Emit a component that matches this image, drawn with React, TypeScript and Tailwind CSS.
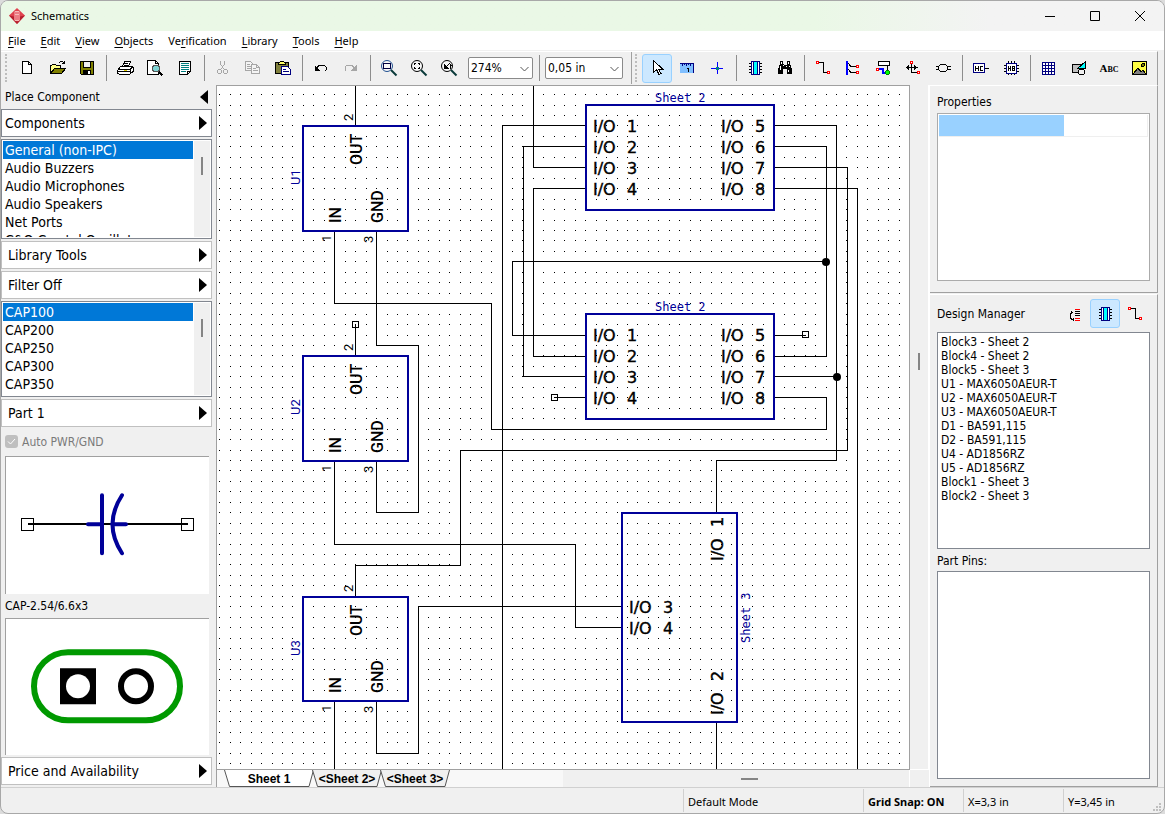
import type { ReactNode } from "react";
import clsx from "clsx";

/* ---------- icons: 16x16, drawn on the pixel grid ---------- */

function Icon({ children, size = 16 }: { children: ReactNode; size?: number }) {
  return (
    <svg
      aria-hidden
      width={size}
      height={size}
      viewBox="0 0 16 16"
      fill="none"
      stroke="#000"
      shapeRendering="crispEdges"
      className="block shrink-0 overflow-visible"
    >
      {children}
    </svg>
  );
}

const pin = (x: number, y: number) => (
  <rect x={x} y={y} width="2" height="2" stroke="#f00" fill="#fff" />
);

const WireIcon = (
  <Icon>
    <path d="M4 2.500h4.500v10h3" />
    {pin(1.5, 1.5)}
    {pin(12.5, 11.5)}
  </Icon>
);

const ChipIcon = (
  <Icon>
    <path d="M2 3.500h13M2 6.500h13M2 9.500h13M2 12.500h13" />
    <rect x="4.500" y="1.500" width="8" height="13" fill="#fff" stroke="#000080" />
    <rect x="6.500" y="1.500" width="4" height="13" fill="#0ff" stroke="#000080" />
  </Icon>
);

const Lens = ({ color = "#000" }: { color?: string }) => (
  <>
    <circle cx="6" cy="6" r="5.500" stroke={color} fill="#f8f8f8" shapeRendering="auto" />
    <path d="M10 10l5.500 5.500" strokeWidth="2" stroke="#0a3a3a" shapeRendering="auto" />
  </>
);

const icons: Record<string, ReactNode> = {
  New: (
    <Icon>
      <path d="M3.500 1.500h6l3 3v9h-9z" fill="#fff" />
      <path d="M9.500 1.500v3h3" />
    </Icon>
  ),
  Open: (
    <Icon>
      <path d="M1.500 13.500v-8h1l1-1h3l1 1h4v3" fill="#ff8" />
      <path d="M1.500 13.500l4-5h11l-4 5z" fill="#808000" />
      <path d="M9.500 3.500l2-2h2l2 2M15.500 1v3M13 3.500h3" />
    </Icon>
  ),
  Save: (
    <Icon>
      <path d="M1.500 1.500h13v13h-12l-1-1z" fill="#808000" />
      <rect x="4.500" y="1.500" width="7" height="6" fill="#efefef" />
      <rect x="4" y="10" width="8" height="4" fill="#000" stroke="none" />
      <rect x="9" y="11" width="2" height="3" fill="#fff" stroke="none" />
    </Icon>
  ),
  Print: (
    <Icon>
      <path d="M5.500 6.500l2-5h6l-2 5z" fill="#fff" />
      <path d="M7 3.500h4M7 5.500h4" />
      <path d="M0.500 10.500l3-4h11l1.500 1v4l-3 2.500h-11l-1.500-1z" fill="#fff" />
      <path d="M1 9.500h12l3-3M13.500 9.500v4M1 11.500h12" />
      <path d="M7 10.500h3" stroke="#e0d000" />
    </Icon>
  ),
  Preview: (
    <Icon>
      <path d="M0.500 0.500h8l3 3v11h-11z" fill="#fff" />
      <path d="M8.500 0.500v3h3" />
      <circle cx="9" cy="8.500" r="3.500" fill="#7fd6d6" stroke="#555" />
      <path d="M12 12l3.500 3.500" strokeWidth="2" />
    </Icon>
  ),
  Report: (
    <Icon>
      <path d="M2.500 1.500h11v10l-3 3h-8z" fill="#fff" />
      <path d="M4 3.500h8M4 5.500h8M4 7.500h8M4 9.500h8M4 11.500h5" stroke="#008080" />
      <path d="M10.500 14v-2.500h3" />
    </Icon>
  ),
  Cut: (
    <Icon>
      <g stroke="#a6a6a6">
        <path d="M5.500 1v3l4 6M9.500 1v3l-4 6" />
        <circle cx="4.500" cy="11.500" r="2" />
        <circle cx="10.500" cy="11.500" r="2" />
      </g>
    </Icon>
  ),
  Copy: (
    <Icon>
      <g stroke="#a6a6a6" fill="#f4f4f4">
        <path d="M0.500 1.500h5l3 3v6h-8zM2 4.500h3M2 6.500h4M2 8.500h4" />
        <path d="M6.500 4.500h5l3 3v6h-8zM11.500 4.500v3h3M8 8.500h3M8 10.500h5" />
      </g>
    </Icon>
  ),
  Paste: (
    <Icon>
      <rect x="0.500" y="2.500" width="13" height="11" fill="#80803c" />
      <path d="M3.500 4.500v-1l2-2h3l2 2v1z" fill="#ff6" />
      <path d="M6.500 6.500h6l3 3v5h-9z" fill="#fff" stroke="#000080" />
      <path d="M8 9.500h3M8 11.500h6" stroke="#000080" />
    </Icon>
  ),
  Undo: (
    <Icon>
      <path d="M3 8.500l2.500-2.500 2-1h3l2.500 2v3l-1.500 1.500" />
      <path d="M1.500 5v5.500h5.500z" fill="#000" stroke="none" />
    </Icon>
  ),
  Redo: (
    <Icon>
      <path d="M12 8.500l-2.500-2.500-2-1h-3l-2.500 2v3l1.500 1.500" stroke="#a6a6a6" />
      <path d="M13.500 5v5.500h-5.500z" fill="#a6a6a6" stroke="none" />
    </Icon>
  ),
  "Zoom In": (
    <Icon>
      <Lens color="#1f4f8f" />
      <rect x="2.500" y="3.500" width="7" height="5" stroke="#000040" />
    </Icon>
  ),
  "Zoom All": (
    <Icon>
      <Lens />
      <path d="M3.500 5v-1.500h1.500M7 3.500h1.500v1.500M3.500 7v1.500h1.500M7 8.500h1.500v-1.500" />
    </Icon>
  ),
  "Zoom Previous": (
    <Icon>
      <Lens />
      <path d="M3 4v5h5z" fill="#000" stroke="none" />
      <path d="M5 7l3.500-3.500 1.500 2-1 3" />
    </Icon>
  ),
  Select: (
    <Icon>
      <path d="M4.500 0.500v12l3-3 2.500 5 2-1-2.500-4.500h4z" fill="#fff" />
    </Icon>
  ),
  Measure: (
    <Icon>
      <rect x="1.500" y="3.500" width="13" height="9" fill="#80bfff" stroke="#80bfff" />
      <path d="M1 3.500h14M14.500 3v10M3.500 4v2M5.500 4v1M7.500 4v2M9.500 4v1M11.500 4v2" stroke="#000080" />
      <path d="M8 8.500h1.500v3" />
    </Icon>
  ),
  Origin: (
    <Icon>
      <path d="M8.500 2v12M2 8.500h12" stroke="#00f" />
      <rect x="7" y="7" width="3" height="3" fill="#008080" stroke="none" />
    </Icon>
  ),
  Component: ChipIcon,
  Find: (
    <Icon>
      <g fill="#000" stroke="none">
        <path d="M3 1h3v3l1 1h2l1-1V1h3v3l2 5v5h-5V9H6v5H1V9l2-5z" />
      </g>
      <path d="M4.500 2v2M11.500 2v2M3.500 6v4M9.500 6v1M12.500 6v1M11.500 10v2M6.500 5v1" stroke="#fff" />
    </Icon>
  ),
  Wire: WireIcon,
  Bus: (
    <Icon>
      <path d="M2 1v14" stroke="#00f" strokeWidth="2" />
      <path d="M3 3l3 3.500h5M3 9l3 3.500h5" />
      {pin(11.5, 5.5)}
      {pin(11.5, 11.5)}
    </Icon>
  ),
  "Net Port": (
    <Icon>
      <rect x="3.500" y="1.500" width="11" height="4" fill="#fff" />
      <path d="M12.500 6v4" />
      <path d="M4 9h4v4h4" stroke="#00f" strokeWidth="2" />
      {pin(1.5, 8.5)}
      <circle cx="12.500" cy="12.500" r="2" fill="#0f0" stroke="#008000" />
    </Icon>
  ),
  "Move Pin": (
    <Icon>
      <path d="M6.500 4v8.500h5M0.500 7.500h12M3.500 5v5M2.500 6v3M9.500 5v5M10.500 6v3" />
      {pin(5.5, 1.5)}
      {pin(12.5, 11.5)}
    </Icon>
  ),
  Connector: (
    <Icon>
      <path d="M5.500 4.500h5l2 2v3l-2 2h-5l-2-2v-3zM0.500 6.500h3M0.500 9.500h3M12.500 6.500h3M12.500 9.500h3" />
    </Icon>
  ),
  "Hierarchy Connector": (
    <Icon>
      <rect x="0.500" y="3.500" width="11" height="9" fill="#fff" stroke="#000080" />
      <path d="M12 8.500h4M2.500 6v5M5.500 6v5M3 8.500h2M10 6.500H7.500v4H10" />
    </Icon>
  ),
  "Hierarchy Block": (
    <Icon>
      <path d="M5.500 1v14M8.500 1v14M11.500 1v14M1 5.500h15M1 8.500h15M1 11.500h15" />
      <rect x="3.500" y="3.500" width="10" height="10" fill="#fff" stroke="#000080" />
      <path d="M5.500 6v5M7.500 6v5M6 8.500h1M9.500 6v5M10 6.500h1.500v4H10M10 8.500h1" />
    </Icon>
  ),
  Table: (
    <Icon>
      <rect x="1.500" y="2.500" width="12" height="12" fill="#fff" stroke="#000080" />
      <path d="M4.500 3v11M7.500 3v11M10.500 3v11M2 5.500h11M2 8.500h11M2 11.500h11" stroke="#000080" />
    </Icon>
  ),
  Shape: (
    <Icon>
      <rect x="1.500" y="4.500" width="9" height="8" fill="#c0c0c0" />
      <circle cx="10.500" cy="12" r="3" fill="#f0f0f0" />
      <path d="M14.500 1.500v7h-8z" fill="#0ff" />
    </Icon>
  ),
  Picture: (
    <Icon>
      <rect x="1.500" y="1.500" width="14" height="13" fill="#ff4" />
      <circle cx="12" cy="5" r="1.500" fill="#808000" />
      <path d="M2 14l5-6 3 4 2-2 3 4z" fill="#808080" />
    </Icon>
  ),
};

function AppLogo() {
  return (
    <svg aria-hidden width="16" height="16" viewBox="0 0 16 16">
      <path d="M8 0l8 7.500L8 16 0 7.500z" fill="#e04350" />
      <path d="M8 16l-8-8.500 5 1V12l3 1.500 3-1.500V8.500l5-1z" fill="#b51f2e" />
      <path d="M6 3.500h4v9H6zM8 3.500v9M6 6.500h4" fill="none" stroke="#f7b8b8" />
    </svg>
  );
}

/* ---------- toolbar ---------- */

function ToolButton({ label, active, children }: { label: string; active?: boolean; children?: ReactNode }) {
  return (
    <button
      type="button"
      aria-label={label}
      title={label}
      className={clsx(
        "flex h-[29px] w-[30px] shrink-0 items-center justify-center rounded-[3px] border",
        active ? "border-[#99d1ff] bg-[#cce8ff]" : "border-transparent",
      )}
    >
      {children ?? icons[label]}
    </button>
  );
}

function Separator() {
  return (
    <div className="flex w-2 shrink-0 justify-center">
      <div className="h-[26px] w-px bg-[#8d8d8d]" />
    </div>
  );
}

function Grip() {
  return <div className="mr-[5px] h-7 shrink-0 border-l-2 border-dotted border-[#bdbdbd]" />;
}

function Combo({ label, value, options, className }: { label: string; value: string; options: string[]; className: string }) {
  return (
    <div className={clsx("relative h-[22px] shrink-0", className)}>
      <select
        aria-label={label}
        defaultValue={value}
        className="h-full w-full appearance-none rounded-[2px] border border-[#8a8a8a] bg-white pl-[2px] text-xs"
      >
        {options.map((o) => (
          <option key={o}>{o}</option>
        ))}
      </select>
      <svg aria-hidden width="9" height="6" className="pointer-events-none absolute top-[9px] right-1">
        <path d="M0.500 1l4 4 4-4" fill="none" stroke="#555" />
      </svg>
    </div>
  );
}

function Tools({ groups }: { groups: string[][] }) {
  return (
    <>
      {groups.map((group, i) => (
        <div key={i} className="flex items-center">
          {i > 0 && <Separator />}
          {group.map((name) =>
            name === "Text" ? (
              <ToolButton key={name} label={name}>
                <span className="font-['Liberation_Serif',serif] text-[11px] font-bold">
                  A<span className="text-[8px]">BC</span>
                </span>
              </ToolButton>
            ) : (
              <ToolButton key={name} label={name} active={name === "Select"} />
            ),
          )}
        </div>
      ))}
    </>
  );
}

/* ---------- left panel ---------- */

function Arrow({ left }: { left?: boolean }) {
  return (
    <svg aria-hidden width="8" height="14" className="shrink-0">
      <path d={left ? "M8 0v14L0 7z" : "M0 0v14l8-7z"} />
    </svg>
  );
}

function PanelButton({ children, dark }: { children: string; dark?: boolean }) {
  return (
    <button
      type="button"
      className={clsx(
        "flex h-7 shrink-0 items-center justify-between border bg-white pr-1 text-left text-sm",
        dark ? "border-[#828790] pl-[3px]" : "border-[#c0c0c0] pl-[6px]",
      )}
    >
      {children}
      <Arrow />
    </button>
  );
}

function ListBox({ label, items, className }: { label: string; items: string[]; className: string }) {
  return (
    <div className={clsx("flex shrink-0 border border-[#828790] bg-white p-px", className)}>
      <ul role="listbox" aria-label={label} className="min-w-0 flex-1 overflow-hidden text-sm leading-[18px]">
        {items.map((item, i) => (
          <li
            key={item}
            role="option"
            aria-selected={i === 0}
            className={clsx("pl-[2px] whitespace-nowrap", i === 0 && "bg-[#0078d7] text-white")}
          >
            {item}
          </li>
        ))}
      </ul>
      <div className="ml-px flex w-4 justify-center bg-[#f0f0f0] pt-4">
        <div className="h-[18px] w-[2px] bg-[#858585]" />
      </div>
    </div>
  );
}

function LeftPanel() {
  return (
    <aside className="flex w-[216px] shrink-0 flex-col border-r border-[#a0a0a0] pr-1 pb-[2px]">
      <header className="flex h-6 shrink-0 items-center justify-between pr-1 pl-1">
        <h2>Place Component</h2>
        <button type="button" aria-label="Collapse panel">
          <Arrow left />
        </button>
      </header>
      <div className="flex min-h-0 flex-1 flex-col gap-[2px]">
        <PanelButton dark>Components</PanelButton>
        <ListBox
          label="Component libraries"
          className="h-[100px]"
          items={[
            "General (non-IPC)",
            "Audio Buzzers",
            "Audio Microphones",
            "Audio Speakers",
            "Net Ports",
            "C&O Crystal Oscillators",
          ]}
        />
        <PanelButton>Library Tools</PanelButton>
        <PanelButton>Filter Off</PanelButton>
        <ListBox label="Components" className="h-24" items={["CAP100", "CAP200", "CAP250", "CAP300", "CAP350"]} />
        <PanelButton>Part 1</PanelButton>
        <label className="flex h-[25px] shrink-0 items-center gap-1 pl-1 text-[#7a7a7a]">
          <span className="relative block h-[13px] w-[13px]">
            <input type="checkbox" checked disabled readOnly className="block h-full w-full appearance-none rounded-[3px] bg-[#bfbfbf]" />
            <svg aria-hidden width="13" height="13" className="pointer-events-none absolute inset-0">
              <path d="M3 6.500l2.500 2.500 4.500-5" fill="none" stroke="#fff" />
            </svg>
          </span>
          Auto PWR/GND
        </label>
        <div className="mr-[3px] ml-1 min-h-0 flex-1 border-t border-l border-[#a0a0a0] bg-white">
          <svg role="img" aria-label="Symbol preview" viewBox="0 0 203 136" className="h-full w-full">
            <g fill="none" stroke="#000" shapeRendering="crispEdges">
              <path d="M22 67h160" strokeWidth="2" />
              <rect x="15.500" y="61.500" width="12" height="12" />
              <rect x="175.500" y="61.500" width="12" height="12" />
            </g>
            <path
              d="M96 38v58M82 67h14M106 67h14M116 38Q97 67 116 96"
              fill="none"
              stroke="#000099"
              strokeWidth="4"
              strokeLinecap="round"
            />
          </svg>
        </div>
        <p className="flex h-5 shrink-0 items-center pl-1">CAP-2.54/6.6x3</p>
        <div className="mr-[3px] ml-1 min-h-0 flex-1 border-t border-l border-[#a0a0a0] bg-white">
          <svg role="img" aria-label="Footprint preview" viewBox="0 0 203 136" className="h-full w-full">
            <rect x="28" y="33" width="146" height="68" rx="34" fill="none" stroke="#009900" strokeWidth="6" />
            <rect x="54" y="49" width="36" height="36" />
            <circle cx="72" cy="67" r="12" fill="#fff" />
            <circle cx="130" cy="67" r="15" fill="none" stroke="#000" strokeWidth="6" />
          </svg>
        </div>
        <PanelButton>Price and Availability</PanelButton>
      </div>
    </aside>
  );
}

/* ---------- schematic sheet ---------- */

// Grid pitch at the current zoom; dots snap to whole pixels
const PITCH = 10.453;
const dots = Array.from({ length: 100 }, (_, r) =>
  Array.from({ length: 180 }, (_, c) => {
    const x = Math.round(229.75 + (c - 1) * PITCH);
    const y = Math.round(94.1 + r * PITCH);
    return `M${x} ${y}h1v1h-1z`;
  }).join(""),
).join("");

const wires = [
  "M355.500 80V126",
  "M334.500 231V303.500H491.500V429.500H826.500V397.500H774",
  "M376.500 231V345.500H418.500V512.500H376.500V461",
  "M355.500 324V356",
  "M334.500 461V544.500H575.500V627.500H622",
  "M355.500 597V565.500H460.500V450.500H847.500V167.500H774",
  "M334.500 701V2000",
  "M376.500 701V753.500H418.500V606.500H622",
  "M586 125.500H502.500V2000",
  "M586 146.500H523.500V376.500H586",
  "M533.500 80V167.500H586",
  "M586 188.500H533.500V356.500H586",
  "M586 335.500H512.500V261.500H826",
  "M774 146.500H826.500V356.500H774",
  "M774 125.500H836.500V460.500H716.500V513",
  "M774 376.500H836",
  "M774 188.500H857.500V2000",
  "M554 397.500H586",
  "M774 335.500H805",
  "M716.500 722V2000",
].join("");

const pinFont = "font-['Roboto',sans-serif] text-[16px] font-medium";
const nameFont = "font-['DejaVu_Sans_Mono',monospace] text-[12px] fill-[#000099]";
const numberFont = "font-['Roboto',sans-serif] text-[13px]";

function VText({ x, y, className, children }: { x: number; y: number; className: string; children: string }) {
  return (
    <text transform={`translate(${x} ${y}) rotate(-90)`} className={className}>
      {children}
    </text>
  );
}

function Port({ x, y, n, vertical }: { x: number; y: number; n: number; vertical?: boolean }) {
  return (
    <text
      transform={`translate(${x} ${y}) rotate(${vertical ? -90 : 0})`}
      stroke="#000"
      strokeWidth="0.4"
      className="font-['DejaVu_Sans',sans-serif] text-[16px]"
    >
      I/O <tspan x="34">{n}</tspan>
    </text>
  );
}

function Regulator({ name, y, h = 105 }: { name: string; y: number; h?: number }) {
  return (
    <g>
      <rect x="303" y={y} width="105" height={h} fill="none" stroke="#000099" strokeWidth="2" shapeRendering="crispEdges" />
      <VText x={300} y={y + 59} className="fill-[#000099] font-['Roboto',sans-serif] text-[13px]">{name}</VText>
      <VText x={353} y={y - 5} className={numberFont}>2</VText>
      <VText x={362} y={y + 39} className={pinFont}>OUT</VText>
      <VText x={341} y={y + h - 8} className={pinFont}>IN</VText>
      <VText x={383} y={y + h - 8} className={pinFont}>GND</VText>
      <VText x={331} y={y + h + 11} className={numberFont}>1</VText>
      <VText x={373} y={y + h + 12} className={numberFont}>3</VText>
    </g>
  );
}

function SheetBlock({ y }: { y: number }) {
  return (
    <g>
      <text x="655" y={y - 3} className={nameFont}>Sheet 2</text>
      <rect x="586" y={y} width="188" height="105" fill="none" stroke="#000099" strokeWidth="2" shapeRendering="crispEdges" />
      {[1, 2, 3, 4].map((n) => (
        <g key={n}>
          <Port x={593} y={y + 6 + n * 21} n={n} />
          <Port x={721} y={y + 6 + n * 21} n={n + 4} />
        </g>
      ))}
    </g>
  );
}

function Schematic() {
  return (
    <svg role="img" aria-label="Schematic sheet" className="block h-full w-full bg-white">
      {/* shapes are laid out in window coordinates */}
      <g transform="translate(-217 -86)">
        <path d={dots} shapeRendering="crispEdges" />
        <path d={wires} fill="none" stroke="#000" shapeRendering="crispEdges" />
        <g fill="none" stroke="#000" shapeRendering="crispEdges">
          <rect x="352.500" y="321.500" width="6" height="6" />
          <rect x="551.500" y="394.500" width="6" height="6" />
          <rect x="802.500" y="331.500" width="6" height="6" />
        </g>
        <circle cx="826" cy="262" r="4" />
        <circle cx="837" cy="377" r="4" />
        <Regulator name="U1" y={126} />
        <Regulator name="U2" y={356} />
        <Regulator name="U3" y={597} h={104} />
        <SheetBlock y={105} />
        <SheetBlock y={314} />
        <rect x="622" y="513" width="115" height="209" fill="none" stroke="#000099" strokeWidth="2" shapeRendering="crispEdges" />
        <Port x={629} y={613} n={3} />
        <Port x={629} y={634} n={4} />
        <Port x={723} y={561} n={1} vertical />
        <Port x={723} y={715} n={2} vertical />
        <VText x={750} y={643} className={nameFont}>Sheet 3</VText>
      </g>
    </svg>
  );
}

function SheetTab({ children, active }: { children: string; active?: boolean }) {
  const w = active ? 90 : 70;
  return (
    <button
      type="button"
      role="tab"
      aria-selected={!!active}
      className={clsx("relative h-[17px] font-['Liberation_Sans',sans-serif] text-xs font-bold", active ? "w-[90px]" : "-ml-[2px] w-[70px]")}
    >
      <svg aria-hidden width={w} height="17" className="absolute inset-0">
        <path d={`M0.500 0l5 16.500H${w - 5}l4.500-16.500`} fill={active ? "#fff" : "#f0f0f0"} stroke="#555" />
      </svg>
      <span className="relative">{children}</span>
    </button>
  );
}

function Workspace() {
  return (
    <main className="flex min-w-0 flex-1 flex-col">
      <div className="flex min-h-0 flex-1">
        <div className="min-w-0 flex-1 overflow-hidden border-t border-r border-b border-[#a0a0a0]">
          <Schematic />
        </div>
        <div className="flex w-[19px] items-center justify-center border-r border-b border-white pb-[132px]">
          <div className="h-[17px] w-[2px] bg-[#858585]" />
        </div>
      </div>
      <div className="flex h-[17px] shrink-0">
        <div role="tablist" className="flex w-[346px] shrink-0 bg-[#f8f8f8] pl-[7px]">
          <SheetTab active>Sheet 1</SheetTab>
          <SheetTab>{"<Sheet 2>"}</SheetTab>
          <SheetTab>{"<Sheet 3>"}</SheetTab>
        </div>
        <div className="mr-[19px] flex flex-1 items-center justify-center border-r border-white pl-[26px]">
          <div className="h-[2px] w-[17px] bg-[#858585]" />
        </div>
      </div>
    </main>
  );
}

/* ---------- right panel ---------- */

const parts = [
  "Block3 - Sheet 2",
  "Block4 - Sheet 2",
  "Block5 - Sheet 3",
  "U1 - MAX6050AEUR-T",
  "U2 - MAX6050AEUR-T",
  "U3 - MAX6050AEUR-T",
  "D1 - BA591,115",
  "D2 - BA591,115",
  "U4 - AD1856RZ",
  "U5 - AD1856RZ",
  "Block1 - Sheet 3",
  "Block2 - Sheet 3",
];

function RightPanel() {
  return (
    <aside className="mr-[6px] flex w-[229px] shrink-0 flex-col border-l border-white">
      <section className="flex h-[208px] shrink-0 flex-col border-t border-r border-b border-t-white border-r-[#a0a0a0] border-b-[#a0a0a0] pr-[7px] pl-[7px]">
        <h2 className="flex h-[27px] shrink-0 items-center pt-1">Properties</h2>
        <div className="h-[168px] border border-[#ababab] bg-white p-px">
          <div className="flex h-[22px] border-r border-b border-[#efefef]">
            <div className="w-3/5 bg-[#99d1ff]" />
          </div>
        </div>
      </section>
      <section className="mt-px flex min-h-0 flex-1 flex-col border-t border-r border-b border-t-white border-r-[#a0a0a0] border-b-[#a0a0a0] pr-[7px] pb-[7px] pl-[7px]">
        <header className="flex h-[37px] shrink-0 items-center">
          <h2 className="flex-1">Design Manager</h2>
          <ToolButton label="Sort">
            <Icon>
              <path d="M8 3.500h5M8 12.500h5M8 14.500h5" stroke="#f00" />
              <path d="M8 5.500h5M8 7.500h5M8 9.500h5M6 6.500h-1.500l-1 2v3l1 2h2M4.500 5v3M6.500 12v3" />
            </Icon>
          </ToolButton>
          <ToolButton label="Components" active>
            {ChipIcon}
          </ToolButton>
          <ToolButton label="Nets">{WireIcon}</ToolButton>
        </header>
        <ul aria-label="Parts" className="h-[217px] shrink-0 overflow-hidden border border-[#828790] bg-white pt-[2px] pl-[3px] leading-[14px]">
          {parts.map((p) => (
            <li key={p}>{p}</li>
          ))}
        </ul>
        <h2 className="flex h-[22px] shrink-0 items-center pt-px">Part Pins:</h2>
        <div className="min-h-0 flex-1 border border-[#828790] bg-white" />
      </section>
    </aside>
  );
}

/* ---------- window ---------- */

const menu = ["File", "Edit", "View", "Objects", "Ver|ification", "Library", "Tools", "Help"];

function MenuItem({ label }: { label: string }) {
  // "|" moves the access key to the letter before it
  const bar = label.indexOf("|");
  const at = bar > 0 ? bar - 1 : 0;
  const text = label.replace("|", "");
  return (
    <button type="button" className="px-[7px]">
      {text.slice(0, at)}
      <span className="underline underline-offset-2">{text[at]}</span>
      {text.slice(at + 1)}
    </button>
  );
}

export default function App() {
  return (
    <div className="h-screen bg-[#dcdcdc]">
      <div className="flex h-full flex-col overflow-hidden rounded-lg border border-[#a8a8a8] bg-[#f0f0f0] font-['DejaVu_Sans_Condensed','DejaVu_Sans',sans-serif] text-xs text-black">
        <header className="flex h-[30px] shrink-0 items-center bg-linear-to-r from-[#eaf8e6] from-70% to-[#f3f3f3] to-85% pl-2 font-['Noto_Sans',sans-serif] text-[11px]">
          <AppLogo />
          <h1 className="ml-[6px] flex-1">Schematics</h1>
          <div className="mr-[2px] flex h-full">
            {["M0 5.500h10", "M0.500 0.500h9v9h-9z", "M0 0l10 10M10 0L0 10"].map((d, i) => (
              <button key={d} type="button" aria-label={["Minimize", "Maximize", "Close"][i]} className="flex w-[45px] items-center justify-center">
                <svg aria-hidden width="10" height="10" className="overflow-visible">
                  <path d={d} fill="none" stroke="#000" />
                </svg>
              </button>
            ))}
          </div>
        </header>

        <nav className="flex h-5 shrink-0 items-center gap-px border-b border-[#f0f0f0] bg-white pt-[2px] font-['Noto_Sans',sans-serif] text-[11px]">
          {menu.map((m) => (
            <MenuItem key={m} label={m} />
          ))}
        </nav>

        <div className="mr-[6px] flex h-[34px] shrink-0 border-t border-r border-t-white border-r-[#a0a0a0] pb-px">
          <div className="flex w-[631px] shrink-0 items-center border-r border-[#a0a0a0] pl-1">
            <Grip />
            <Tools
              groups={[
                ["New", "Open", "Save"],
                ["Print", "Preview", "Report"],
                ["Cut", "Copy", "Paste"],
                ["Undo", "Redo"],
                ["Zoom In", "Zoom All", "Zoom Previous"],
              ]}
            />
            <Combo label="Zoom" value="274%" options={["100%", "200%", "274%"]} className="ml-1 w-[65px]" />
            <div className="mx-[2px]">
              <Separator />
            </div>
            <Combo label="Grid" value="0,05 in" options={["0,025 in", "0,05 in", "0,1 in"]} className="w-[78px]" />
          </div>
          <div className="flex min-w-0 flex-1 items-center overflow-hidden pl-[3px]">
            <Grip />
            <Tools
              groups={[
                ["Select", "Measure", "Origin"],
                ["Component", "Find"],
                ["Wire", "Bus", "Net Port", "Move Pin", "Connector"],
                ["Hierarchy Connector", "Hierarchy Block"],
                ["Table", "Shape", "Text", "Picture"],
              ]}
            />
          </div>
        </div>

        <div className="flex min-h-0 flex-1">
          <LeftPanel />
          <Workspace />
          <RightPanel />
        </div>

        <footer className="flex h-[26px] shrink-0 items-center border-t border-[#d0d0d0] pr-px font-['Noto_Sans',sans-serif] text-[11px]">
          <div className="flex-1" />
          <div className="w-[180px] border-l border-[#d0d0d0] pt-[6px] pb-[3px] pl-1">Default Mode</div>
          <div className="w-[100px] border-l border-[#d0d0d0] pt-[6px] pb-[3px] pl-1 font-bold">Grid Snap: ON</div>
          <div className="w-[100px] border-l border-[#d0d0d0] pt-[6px] pb-[3px] pl-1">X=3,3 in</div>
          <div className="w-[100px] border-l border-[#d0d0d0] pt-[6px] pb-[3px] pl-1">Y=3,45 in</div>
          <svg aria-hidden width="10" height="10" className="-ml-[10px] self-end">
            <path d="M6 0h2v2h-2zM3 3h2v2h-2zM6 3h2v2h-2zM0 6h2v2h-2zM3 6h2v2h-2zM6 6h2v2h-2z" fill="#bfbfbf" />
          </svg>
        </footer>
      </div>
    </div>
  );
}
